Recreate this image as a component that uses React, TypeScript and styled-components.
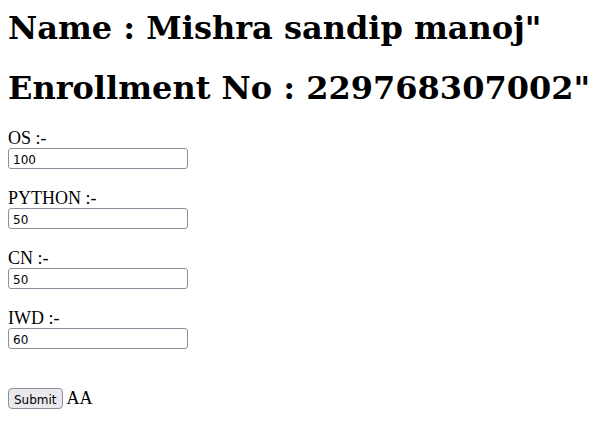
import React from "react";
import styled, { createGlobalStyle } from "styled-components";

const GlobalStyle = createGlobalStyle`
  body {
    margin: 8px;
    font-family: "Liberation Serif", serif;
    font-size: 18px;
    color: #000;
    background: #fff;
  }
`;

const Page = styled.form`
  display: flex;
  flex-direction: column;
  padding-top: 1px;
`;

const Heading = styled.h1`
  font-family: "DejaVu Serif", serif;
  font-size: 32px;
  font-weight: bold;
  line-height: 38px;
  white-space: nowrap;
  margin: 0 0 22px;
`;

const Field = styled.div`
  display: flex;
  flex-direction: column;
  align-items: flex-start;
  margin-bottom: 20px;
`;

const Label = styled.label`
  line-height: 19px;
`;

const MarkInput = styled.input`
  box-sizing: border-box;
  width: 180px;
  height: 21px;
  padding: 3px 4px 0;
  border: 1px solid #8f8f9d;
  border-radius: 3px;
  background: #fff;
  font-family: "DejaVu Sans", sans-serif;
  font-size: 12px;
  color: #000;
`;

const Actions = styled.div`
  display: flex;
  align-items: center;
  gap: 4px;
  margin-top: 19px;
`;

const SubmitButton = styled.button`
  box-sizing: border-box;
  height: 21px;
  padding: 2px 5px 0;
  border: 1px solid #8f8f9d;
  border-radius: 4px;
  background: #e9e9ed;
  font-family: "DejaVu Sans", sans-serif;
  font-size: 12px;
  color: #000;
`;

const subjects = [
  { name: "OS", value: "100" },
  { name: "PYTHON", value: "50" },
  { name: "CN", value: "50" },
  { name: "IWD", value: "60" },
];

const App = () => {
  return (
    <>
      <GlobalStyle />
      <Page onSubmit={(e) => e.preventDefault()}>
        <Heading>Name : Mishra sandip manoj"</Heading>
        <Heading>Enrollment No : 229768307002"</Heading>
        {subjects.map((s) => (
          <Field key={s.name}>
            <Label htmlFor={s.name}>{s.name} :-</Label>
            <MarkInput id={s.name} type="text" defaultValue={s.value} />
          </Field>
        ))}
        <Actions>
          <SubmitButton type="submit">Submit</SubmitButton>
          <span>AA</span>
        </Actions>
      </Page>
    </>
  );
};

export default App;
